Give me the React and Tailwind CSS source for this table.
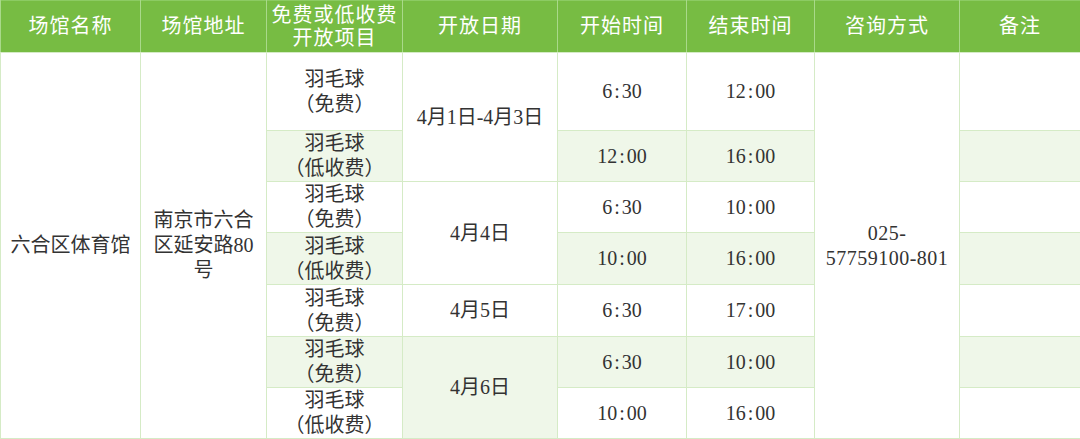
import React from 'react';

const font = { fontFamily: '"Liberation Serif", "Noto Sans CJK SC", serif' };

const headers = ['场馆名称', '场馆地址', '免费或低收费开放项目', '开放日期', '开始时间', '结束时间', '咨询方式', '备注'];
const widths = [140, 126, 136, 155, 129, 128, 145, 121];

// each row: project, date (with span) or null, start, end
const rows = [
  { h: 'h-[78px]', item: '（免费）', date: { text: '4月1日-4月3日', span: 2 }, start: '6:30', end: '12:00' },
  { h: 'h-[51px]', item: '（低收费）', date: null, start: '12:00', end: '16:00' },
  { h: 'h-[51px]', item: '（免费）', date: { text: '4月4日', span: 2 }, start: '6:30', end: '10:00' },
  { h: 'h-[52px]', item: '（低收费）', date: null, start: '10:00', end: '16:00' },
  { h: 'h-[52px]', item: '（免费）', date: { text: '4月5日', span: 1 }, start: '6:30', end: '17:00' },
  { h: 'h-[51px]', item: '（免费）', date: { text: '4月6日', span: 2 }, start: '6:30', end: '10:00' },
  { h: 'h-[51px]', item: '（低收费）', date: null, start: '10:00', end: '16:00' },
];

const cell = 'border border-[#d5ebc6] text-center align-middle px-2 py-0 text-[20px] leading-[25px] text-[#333333]';

function Time({ value }) {
  const [a, b] = value.split(':');
  return (
    <>
      {a}
      <span className="mx-[2px]">:</span>
      {b}
    </>
  );
}

export default function App() {
  return (
    <div className="w-[1080px] h-[439px] bg-white overflow-hidden" style={font}>
      <table className="table-fixed border-collapse w-[1079px] border border-[#8ccb63]">
        <colgroup>
          {widths.map((w, i) => (
            <col key={i} style={{ width: w }} />
          ))}
        </colgroup>
        <thead>
          <tr className="h-[52px] bg-[#77bc43]">
            {headers.map((t, i) => (
              <th
                key={i}
                className="border-x border-[#a9d98a] border-b border-b-[#d5ebc6] px-1 py-0 text-center align-middle text-[20px] leading-[23px] tracking-[1px] font-normal text-white"
              >
                {t}
              </th>
            ))}
          </tr>
        </thead>
        <tbody>
          {rows.map((r, i) => {
            const bg = i % 2 === 1 ? 'bg-[#eff7e9]' : 'bg-white';
            return (
              <tr key={i} className={r.h}>
                {i === 0 && (
                  <>
                    <td rowSpan={7} className={`${cell} bg-white px-1`}>六合区体育馆</td>
                    <td rowSpan={7} className={`${cell} bg-white`}>南京市六合区延安路80号</td>
                  </>
                )}
                <td className={`${cell} ${bg}`}>
                  羽毛球
                  <br />
                  {r.item}
                </td>
                {r.date && (
                  <td rowSpan={r.date.span} className={`${cell} ${bg}`}>
                    {r.date.text}
                  </td>
                )}
                <td className={`${cell} ${bg}`}><Time value={r.start} /></td>
                <td className={`${cell} ${bg}`}><Time value={r.end} /></td>
                {i === 0 && (
                  <td rowSpan={7} className={`${cell} bg-white tracking-[0.5px]`}>
                    025-
                    <br />
                    57759100-801
                  </td>
                )}
                <td className={`${cell} ${bg}`}></td>
              </tr>
            );
          })}
        </tbody>
      </table>
    </div>
  );
}
